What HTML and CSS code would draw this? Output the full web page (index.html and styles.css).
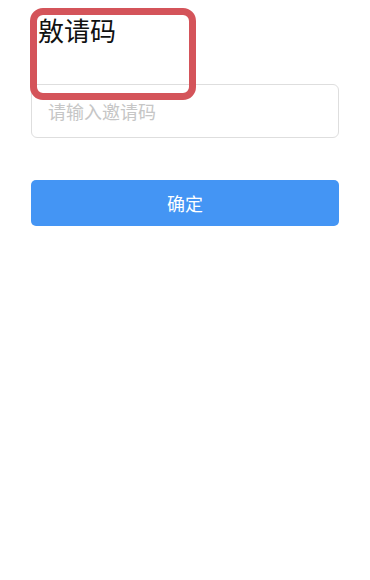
FILE: index.html
```html
<!DOCTYPE html>
<html lang="zh">
<head>
<meta charset="utf-8">
<title>邀请码</title>
<link rel="stylesheet" href="styles.css">
</head>
<body>
<div class="page">
  <h1 class="title">敫请码</h1>
  <input class="code-input" type="text" placeholder="请输入邀请码">
  <button class="confirm" type="button">确定</button>
  <div class="highlight"></div>
</div>
</body>
</html>
```
FILE: styles.css
```css
html, body {
  margin: 0;
  padding: 0;
  background: #ffffff;
}
body {
  font-family: "Noto Sans CJK SC", "Noto Sans", sans-serif;
}
.page {
  position: relative;
  display: flex;
  flex-direction: column;
  padding: 15px 31px 0 31px;
}
.title {
  margin: 0 0 39px 0;
  padding-left: 7px;
  font-size: 26px;
  line-height: 30px;
  font-weight: 400;
  color: #111111;
}
.code-input {
  box-sizing: border-box;
  width: 100%;
  height: 54px;
  margin: 0;
  padding: 0 16px;
  border: 1px solid #dedede;
  border-radius: 6px;
  font-family: inherit;
  font-size: 18px;
  color: #333333;
  outline: none;
  background: #ffffff;
}
.code-input::placeholder {
  color: #c6c6c6;
}
.confirm {
  box-sizing: border-box;
  width: 100%;
  height: 46px;
  margin-top: 42px;
  border: none;
  border-radius: 5px;
  background: #4495f4;
  color: #ffffff;
  font-family: inherit;
  font-size: 18px;
}
.highlight {
  position: absolute;
  left: 30px;
  top: 8px;
  width: 166px;
  height: 92px;
  box-sizing: border-box;
  border: 7px solid #d4545a;
  border-radius: 13px;
  pointer-events: none;
}
```
